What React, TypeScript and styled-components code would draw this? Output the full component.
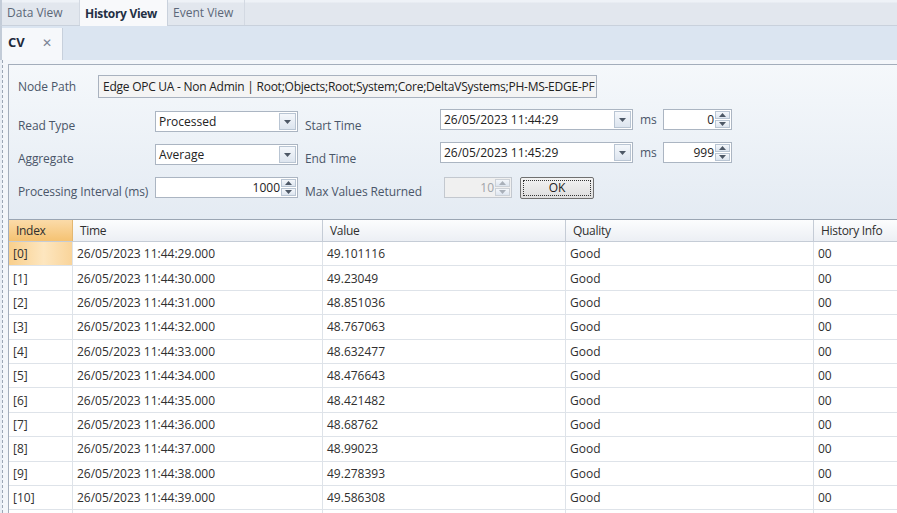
import styled, { createGlobalStyle } from 'styled-components';

const GlobalStyle = createGlobalStyle`
  html, body {
    margin: 0;
    padding: 0;
    background: #e9eef5;
    font-family: 'Open Sans', 'Noto Sans', 'Liberation Sans', sans-serif;
    font-size: 12px;
    overflow: hidden;
  }
  * {
    box-sizing: border-box;
  }
`;

const Frame = styled.div`
  width: 897px;
  height: 513px;
  display: flex;
  flex-direction: column;
  overflow: hidden;
`;

const TopTabBar = styled.div`
  height: 26px;
  display: flex;
  align-items: stretch;
  background: linear-gradient(#eef2f7 0, #eef2f7 2px, #e2e7ee 3px, #e2e7ee 100%);
  border-bottom: 1px solid #c9d1dc;
  border-left: 2px solid #c3ccd8;
`;

const TopTab = styled.div<{ $active?: boolean; $width: number }>`
  width: ${(p) => p.$width}px;
  display: flex;
  align-items: center;
  padding-left: 5px;
  color: ${(p) => (p.$active ? '#233044' : '#5c6778')};
  font-weight: ${(p) => (p.$active ? 700 : 400)};
  letter-spacing: ${(p) => (p.$active ? '-0.3px' : '0')};
  background: ${(p) => (p.$active ? '#f8f9fb' : 'transparent')};
  border-right: 1px solid ${(p) => (p.$active ? '#c9d1dc' : '#d3d9e2')};
  margin-bottom: ${(p) => (p.$active ? '-1px' : '0')};
`;

const DocTabBar = styled.div`
  height: 34px;
  display: flex;
  align-items: flex-end;
  background: #dbe5f1;
  border-left: 2px solid #c3ccd8;
`;

const DocTab = styled.div`
  width: 61px;
  height: 32px;
  display: flex;
  align-items: center;
  justify-content: space-between;
  padding: 0 10px 4px 6px;
  background: #f6f8fb;
  border-right: 1px solid #c7d0dc;
`;

const DocTitle = styled.span`
  font-weight: 700;
  font-size: 13px;
  color: #1e2a3b;
`;

const CloseMark = styled.span`
  color: #7a8494;
  font-size: 12px;
`;

const DocBody = styled.div`
  flex: 1;
  display: flex;
  flex-direction: column;
  margin-left: 2px;
  border-left: 1px dashed #9ba6b5;
  background: #f3f6fa;
  padding: 4px 0 0 5px;
  min-height: 0;
`;

const Workspace = styled.div`
  flex: 1;
  display: flex;
  flex-direction: column;
  border-left: 1px solid #a3adbb;
  border-top: 1px solid #a3adbb;
  min-height: 0;
`;

const FormPanel = styled.div`
  height: 154px;
  background: linear-gradient(#f5f8fb, #e4ebf3);
  padding: 10px 0 0 9px;
  display: flex;
  flex-direction: column;
  gap: 7px;
`;

const PathRow = styled.div`
  display: flex;
  align-items: center;
`;

const Label = styled.span<{ $drop?: boolean }>`
  color: #4a5669;
  white-space: nowrap;
  letter-spacing: -0.1px;
  padding-top: ${(p) => (p.$drop ? 7 : 0)}px;
`;

const PathLabel = styled(Label)`
  width: 80px;
`;

const PathBox = styled.div`
  width: 499px;
  height: 23px;
  border: 1px solid #a9b2bf;
  background: #f4f4f4;
  color: #222;
  padding: 0 4px;
  display: flex;
  align-items: center;
  white-space: nowrap;
  overflow: hidden;
  letter-spacing: -0.25px;
`;

const FieldGrid = styled.div`
  display: grid;
  grid-template-columns: 137px 150px 135px 193px 30px 69px;
  grid-auto-rows: 33px;
  align-items: center;
`;

const Combo = styled.div`
  width: 143px;
  height: 21px;
  border: 1px solid #abb5c2;
  background: #fff;
  display: flex;
  align-items: center;
  justify-content: space-between;
  padding: 0 1px 0 3px;
  color: #222;
`;

const DateBox = styled(Combo)`
  width: 193px;
  margin-bottom: 4px;
`;

const DropButton = styled.div`
  width: 17px;
  height: 17px;
  border: 1px solid #b9c5d3;
  background: linear-gradient(#f4f7fb, #dde5ef);
  display: flex;
  align-items: center;
  justify-content: center;
`;

const MsLabel = styled.span`
  color: #4a5669;
  padding-left: 7px;
  margin-bottom: 5px;
`;

const NumBox = styled.div<{ $width: number; $disabled?: boolean; $lift?: boolean }>`
  width: ${(p) => p.$width}px;
  height: 21px;
  border: 1px solid ${(p) => (p.$disabled ? '#c3c8cf' : '#abb5c2')};
  background: ${(p) => (p.$disabled ? '#f0f0f0' : '#fff')};
  color: ${(p) => (p.$disabled ? '#a0a4a9' : '#222')};
  display: flex;
  align-items: center;
  justify-content: flex-end;
  padding-right: 1px;
  gap: 1px;
  margin-bottom: ${(p) => (p.$lift ? 5 : 0)}px;
`;

const Spinner = styled.div`
  width: 15px;
  height: 17px;
  display: flex;
  flex-direction: column;
  gap: 1px;
`;

const SpinHalf = styled.div<{ $disabled?: boolean }>`
  flex: 1;
  border: 1px solid ${(p) => (p.$disabled ? '#ccd1d7' : '#b9c5d3')};
  background: linear-gradient(#f4f7fb, #dde5ef);
  display: flex;
  align-items: center;
  justify-content: center;
`;

const MaxCell = styled.div`
  display: flex;
  align-items: center;
  gap: 8px;
  padding-left: 4px;
`;

const OkButton = styled.div`
  width: 74px;
  height: 22px;
  border: 1px solid #707070;
  border-radius: 2px;
  background: linear-gradient(#f3f3f3, #dedede);
  padding: 2px;
`;

const OkInner = styled.div`
  height: 100%;
  border: 1px dotted #333;
  display: flex;
  align-items: center;
  justify-content: center;
  color: #222;
`;

const Table = styled.div`
  flex: 1;
  background: #fff;
  border-top: 1px solid #9aa5b3;
  overflow: hidden;
`;

const Row = styled.div<{ $header?: boolean }>`
  display: grid;
  grid-template-columns: 64px 250px 243px 248px 130px;
  height: ${(p) => (p.$header ? 22 : 24.4)}px;
  border-bottom: 1px solid ${(p) => (p.$header ? '#c5ccd6' : '#dee3e9')};
`;

const Cell = styled.div<{ $header?: boolean; $selected?: boolean }>`
  display: flex;
  align-items: center;
  padding-left: ${(p) => (p.$header ? 7 : 4)}px;
  border-right: 1px solid ${(p) => (p.$header ? '#c5ccd6' : '#dee3e9')};
  color: #2f2f2f;
  white-space: nowrap;
  overflow: hidden;
  letter-spacing: ${(p) => (p.$header ? '-0.3px' : '0')};
  background: ${(p) =>
    p.$selected
      ? 'linear-gradient(90deg, #f9cf8c, #fde6bf 55%, #f9d49a)'
      : p.$header
      ? 'linear-gradient(#fcfdfe, #eceff4)'
      : '#fff'};
`;

const IndexHeader = styled(Cell)`
  background: linear-gradient(#fbdba9, #f5c272);
  border-right-color: #e3b772;
`;

const Arrow = ({ up, color = '#4d5866' }: { up?: boolean; color?: string }) => (
  <svg width="7" height="4" viewBox="0 0 7 4">
    <path d={up ? 'M0 4 L3.5 0 L7 4 Z' : 'M0 0 L7 0 L3.5 4 Z'} fill={color} />
  </svg>
);

const NumericField = ({
  value,
  width,
  disabled,
  lift,
}: {
  value: string;
  width: number;
  disabled?: boolean;
  lift?: boolean;
}) => (
  <NumBox $width={width} $disabled={disabled} $lift={lift}>
    <span>{value}</span>
    <Spinner>
      <SpinHalf $disabled={disabled}>
        <Arrow up color={disabled ? '#a9b0b9' : '#4d5866'} />
      </SpinHalf>
      <SpinHalf $disabled={disabled}>
        <Arrow color={disabled ? '#a9b0b9' : '#4d5866'} />
      </SpinHalf>
    </Spinner>
  </NumBox>
);

const values = [
  '49.101116',
  '49.23049',
  '48.851036',
  '48.767063',
  '48.632477',
  '48.476643',
  '48.421482',
  '48.68762',
  '48.99023',
  '49.278393',
  '49.586308',
];

export default function App() {
  return (
    <Frame>
      <GlobalStyle />
      <TopTabBar>
        <TopTab $width={78}>Data View</TopTab>
        <TopTab $width={88} $active>
          History View
        </TopTab>
        <TopTab $width={77}>Event View</TopTab>
      </TopTabBar>
      <DocTabBar>
        <DocTab>
          <DocTitle>CV</DocTitle>
          <CloseMark>✕</CloseMark>
        </DocTab>
      </DocTabBar>
      <DocBody>
        <Workspace>
          <FormPanel>
            <PathRow>
              <PathLabel>Node Path</PathLabel>
              <PathBox>
                Edge OPC UA - Non Admin | Root;Objects;Root;System;Core;DeltaVSystems;PH-MS-EDGE-PF
              </PathBox>
            </PathRow>
            <FieldGrid>
              <Label $drop>Read Type</Label>
              <Combo>
                <span>Processed</span>
                <DropButton>
                  <Arrow />
                </DropButton>
              </Combo>
              <Label $drop>Start Time</Label>
              <DateBox>
                <span>26/05/2023 11:44:29</span>
                <DropButton>
                  <Arrow />
                </DropButton>
              </DateBox>
              <MsLabel>ms</MsLabel>
              <NumericField value="0" width={69} lift />

              <Label $drop>Aggregate</Label>
              <Combo>
                <span>Average</span>
                <DropButton>
                  <Arrow />
                </DropButton>
              </Combo>
              <Label $drop>End Time</Label>
              <DateBox>
                <span>26/05/2023 11:45:29</span>
                <DropButton>
                  <Arrow />
                </DropButton>
              </DateBox>
              <MsLabel>ms</MsLabel>
              <NumericField value="999" width={69} lift />

              <Label $drop>Processing Interval (ms)</Label>
              <NumericField value="1000" width={143} />
              <Label $drop>Max Values Returned</Label>
              <MaxCell>
                <NumericField value="10" width={68} disabled />
                <OkButton>
                  <OkInner>OK</OkInner>
                </OkButton>
              </MaxCell>
            </FieldGrid>
          </FormPanel>
          <Table>
            <Row $header>
              <IndexHeader $header>Index</IndexHeader>
              <Cell $header>Time</Cell>
              <Cell $header>Value</Cell>
              <Cell $header>Quality</Cell>
              <Cell $header>History Info</Cell>
            </Row>
            {values.map((v, i) => (
              <Row key={i}>
                <Cell $selected={i === 0}>[{i}]</Cell>
                <Cell>26/05/2023 11:44:{String(29 + i).padStart(2, '0')}.000</Cell>
                <Cell>{v}</Cell>
                <Cell>Good</Cell>
                <Cell>00</Cell>
              </Row>
            ))}
            <Row>
              <Cell />
              <Cell />
              <Cell />
              <Cell />
              <Cell />
            </Row>
          </Table>
        </Workspace>
      </DocBody>
    </Frame>
  );
}
